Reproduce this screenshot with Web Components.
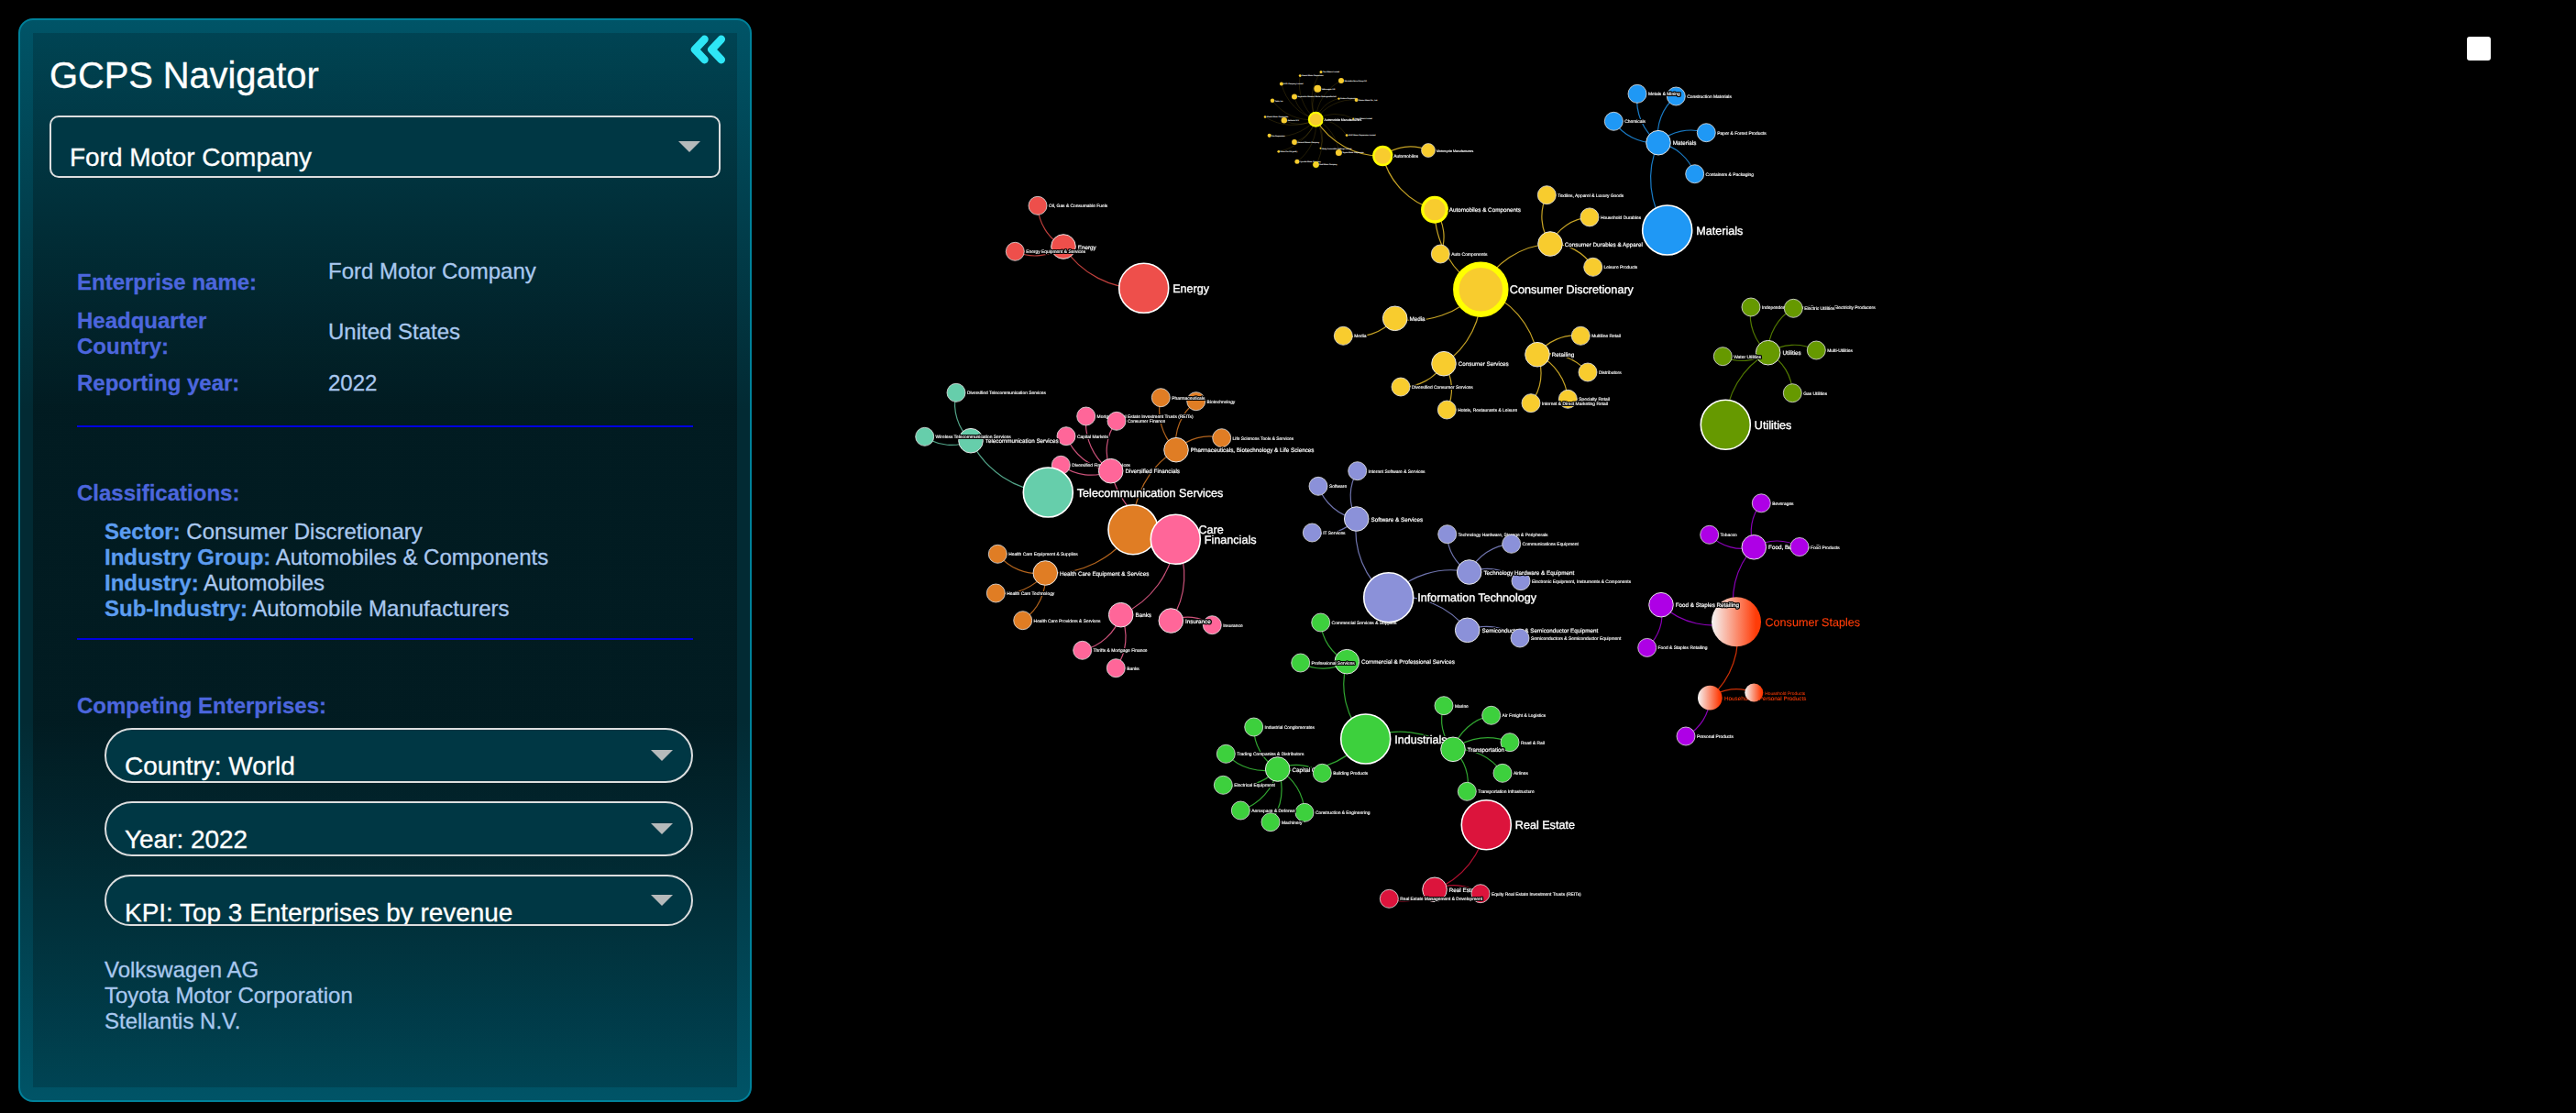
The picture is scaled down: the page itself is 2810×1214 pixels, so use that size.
<!DOCTYPE html>
<html lang="en">
<head>
<meta charset="utf-8">
<title>GCPS Navigator</title>
<style>
  html, body {
    height: 100%;
    margin: 0;
    background: #000;
    font-family: "Liberation Sans", Arial, Helvetica, sans-serif;
  }
</style>
</head>
<body>
<gcps-app></gcps-app>

<script>
class BaseElement extends HTMLElement {
  constructor() {
    super();
    this.attachShadow({ mode: 'open' });
  }

  connectedCallback() {
    const template = document.createElement('template');
    template.innerHTML = `<style>${this.getStyles()}</style>${this.getMarkup()}`;
    this.shadowRoot.replaceChildren(template.content.cloneNode(true));
  }
}

class DropDown extends BaseElement {
  getStyles() {
    return `
      :host {
        display: flex;
        justify-content: space-between;
        align-items: center;
        box-sizing: border-box;
        height: 60px;
        padding: 0 20px 0 20px;
        border: 2px solid #dcdedf;
        border-radius: 30px;
        background: #003744;
        color: #fff;
        font-size: 28px;
        line-height: 32px;
        letter-spacing: -0.03px;
        overflow: hidden;
      }
      :host([square]) {
        height: 68px;
        border-radius: 10px;
      }
      :host([short]) { height: 56px; }
      .value {
        align-self: flex-start;
        padding-top: 24px;
        white-space: nowrap;
      }
      :host([square]) .value { padding-top: 28px; }
      svg {
        width: 24px;
        height: 12px;
        flex: none;
      }
    `;
  }

  getMarkup() {
    return `
      <span class="value"><slot></slot></span>
      <svg viewBox="0 0 24 12"><path d="M0 0h24L12 12z" fill="#b6babb"/></svg>
    `;
  }
}

class InfoRow extends BaseElement {
  getStyles() {
    return `
      :host {
        display: grid;
        grid-template-columns: 274px 1fr;
        font-size: 24px;
        line-height: 28px;
      }
      .label {
        max-width: 190px;
        color: #4c66dd;
        font-weight: bold;
      }
      .value { color: #a9c8ef; }
      :host([raised]) .label, :host([lowered]) .value { padding-top: 12px; }
      :host([raised]) .label { max-width: none; }
    `;
  }

  getMarkup() {
    return `
      <span class="label">${this.getAttribute('label')}</span>
      <span class="value"><slot></slot></span>
    `;
  }
}

class PanelSection extends BaseElement {
  getStyles() {
    return `
      :host {
        display: block;
        border-top: 2px solid #0000e0;
        padding-top: 58px;
        font-size: 24px;
        line-height: 28px;
      }
      h2 {
        margin: 0;
        color: #4c66dd;
        font: inherit;
        font-weight: bold;
      }
      .content { padding-left: 30px; color: #a9c8ef; }
    `;
  }

  getMarkup() {
    return `
      <h2>${this.getAttribute('heading')}</h2>
      <div class="content"><slot></slot></div>
    `;
  }
}

class NavPanel extends BaseElement {
  getStyles() {
    return `
      :host {
        display: flex;
        position: relative;
        box-sizing: border-box;
        width: 800px;
        height: 1182px;
        padding: 14px;
        border: 2px solid #00819a;
        border-radius: 16px;
        background: linear-gradient(#005467 0%, #022a33 36%, #022a33 65%, #005467 100%);
        -webkit-text-stroke: 0.3px currentColor;
      }
      .body {
        flex: 1;
        padding: 23px 18px 0;
        background: linear-gradient(rgba(0, 0, 0, 0.18) 0%, rgba(0, 0, 0, 0.35) 36%, rgba(0, 0, 0, 0.35) 65%, rgba(0, 0, 0, 0.18) 100%);
      }
      .toggle {
        position: absolute;
        top: 15px;
        right: 25px;
        width: 40px;
        height: 34px;
      }
      h1 {
        margin: 0 0 21px;
        color: #fff;
        font-size: 40px;
        font-weight: normal;
        line-height: 46px;
        letter-spacing: -0.15px;
      }
      .sections { padding: 88px 30px 0; }
      .facts {
        display: grid;
        row-gap: 12px;
        padding-bottom: 32px;
      }
      .facts info-row:first-child { min-height: 42px; }
      .levels { padding: 14px 0 18px; }
      .levels b { color: #5c9df0; }
      .filters {
        display: grid;
        gap: 20px;
        padding: 10px 0 34px;
      }
    `;
  }

  getMarkup() {
    return `
      <div class="body">
        <h1>GCPS Navigator</h1>
        <drop-down square>Ford Motor Company</drop-down>
        <div class="sections">
          <div class="facts">
            <info-row raised label="Enterprise name:">Ford Motor Company</info-row>
            <info-row lowered label="Headquarter Country:">United States</info-row>
            <info-row label="Reporting year:">2022</info-row>
          </div>
          <panel-section heading="Classifications:">
            <div class="levels">
              <div><b>Sector:</b> Consumer Discretionary</div>
              <div><b>Industry Group:</b> Automobiles &amp; Components</div>
              <div><b>Industry:</b> Automobiles</div>
              <div><b>Sub-Industry:</b> Automobile Manufacturers</div>
            </div>
          </panel-section>
          <panel-section heading="Competing Enterprises:">
            <div class="filters">
              <drop-down>Country: World</drop-down>
              <drop-down>Year: 2022</drop-down>
              <drop-down short>KPI: Top 3 Enterprises by revenue</drop-down>
            </div>
            <div>Volkswagen AG</div>
            <div>Toyota Motor Corporation</div>
            <div>Stellantis N.V.</div>
          </panel-section>
        </div>
      </div>
      <svg class="toggle" viewBox="0 0 40 34" fill="none" stroke="#2ee6f6" stroke-width="8.5" stroke-linecap="round" stroke-linejoin="round">
        <path d="M15.500 5.800L5 17l10.500 11.200M33.800 5.800L23.300 17l10.500 11.200"/>
      </svg>
    `;
  }
}

const LEVELS = {
  sector: { r: 27, dx: 31.5, size: 12.6, stroke: 1.6, mark: 6.5 },
  group: { r: 13.3, dx: 15.75, size: 6.3, stroke: 1, mark: 3.3 },
  industry: { r: 10, dx: 11.9, size: 4.9, stroke: 0.8, mark: 2.3 },
  sub: { r: 7.5, dx: 9.1, size: 3.5, stroke: 0.6, mark: 2 },
};

const COLORS = {
  energy: '#ee4f4b',
  materials: '#1f98f5',
  industrials: '#3dd03d',
  discretionary: '#f8cc2e',
  staples: '#ae00e6',
  health: '#e07d24',
  financials: '#ff6699',
  it: '#8b91d9',
  telecom: '#66ceab',
  utilities: '#669900',
  realestate: '#dc143c',
  hot: '#ff3c08',
};

// [id, parent, level, x, y, color, label, flag]; later entries lie on top
const NODES = [
  ['en', '', 'sector', 1247.7, 314.3, 'energy', 'Energy'],
  ['en1', 'en', 'group', 1160, 269, 'energy', 'Energy'],
  ['en2', 'en1', 'industry', 1132, 224.3, 'energy', 'Oil, Gas & Consumable Fuels'],
  ['en3', 'en1', 'industry', 1107.3, 274.3, 'energy', 'Energy Equipment & Services'],

  ['ma', '', 'sector', 1818.7, 251, 'materials', 'Materials'],
  ['ma1', 'ma', 'group', 1809, 155.7, 'materials', 'Materials'],
  ['ma2', 'ma1', 'industry', 1760.3, 132.3, 'materials', 'Chemicals'],
  ['ma3', 'ma1', 'industry', 1828.3, 105, 'materials', 'Construction Materials'],
  ['ma4', 'ma1', 'industry', 1848.7, 189.7, 'materials', 'Containers & Packaging'],
  ['ma5', 'ma1', 'industry', 1786, 102.3, 'materials', 'Metals & Mining'],
  ['ma6', 'ma1', 'industry', 1861.3, 144.7, 'materials', 'Paper & Forest Products'],

  ['in', '', 'sector', 1489.7, 806, 'industrials', 'Industrials'],
  ['in1', 'in', 'group', 1393.7, 839, 'industrials', 'Capital Goods'],
  ['in11', 'in1', 'industry', 1442.3, 843.3, 'industrials', 'Building Products'],
  ['in12', 'in1', 'industry', 1423, 886.3, 'industrials', 'Construction & Engineering'],
  ['in13', 'in1', 'industry', 1353.3, 884, 'industrials', 'Aerospace & Defense'],
  ['in14', 'in1', 'industry', 1334.3, 856.3, 'industrials', 'Electrical Equipment'],
  ['in15', 'in1', 'industry', 1367.7, 793, 'industrials', 'Industrial Conglomerates'],
  ['in16', 'in1', 'industry', 1386, 896.7, 'industrials', 'Machinery'],
  ['in17', 'in1', 'industry', 1337.3, 822.3, 'industrials', 'Trading Companies & Distributors'],
  ['in2', 'in', 'group', 1469.3, 721.7, 'industrials', 'Commercial & Professional Services'],
  ['in21', 'in2', 'industry', 1440.7, 679, 'industrials', 'Commercial Services & Supplies'],
  ['in22', 'in2', 'industry', 1418.7, 723, 'industrials', 'Professional Services'],
  ['in31', 'in3', 'industry', 1647, 809.7, 'industrials', 'Road & Rail'],
  ['in3', 'in', 'group', 1585, 817.3, 'industrials', 'Transportation'],
  ['in32', 'in3', 'industry', 1626.7, 780.3, 'industrials', 'Air Freight & Logistics'],
  ['in33', 'in3', 'industry', 1639, 843.3, 'industrials', 'Airlines'],
  ['in34', 'in3', 'industry', 1575, 769.7, 'industrials', 'Marine'],
  ['in35', 'in3', 'industry', 1600.3, 863.3, 'industrials', 'Transportation Infrastructure'],

  ['cd', '', 'sector', 1615.3, 315.7, 'discretionary', 'Consumer Discretionary', 'mark'],
  ['cd1', 'cd', 'group', 1565, 228.7, 'discretionary', 'Automobiles & Components', 'mark'],
  ['cd11', 'cd1', 'industry', 1571.3, 277, 'discretionary', 'Auto Components'],
  ['cd12', 'cd1', 'industry', 1508.3, 170, 'discretionary', 'Automobiles', 'mark'],
  ['am', 'cd12', 'sub', 1435.3, 130.3, 'discretionary', 'Automobile Manufacturers', 'mark'],
  ['mm', 'cd12', 'sub', 1558, 164, 'discretionary', 'Motorcycle Manufacturers'],
  ['cd2', 'cd', 'group', 1691, 266, 'discretionary', 'Consumer Durables & Apparel'],
  ['cd21', 'cd2', 'industry', 1734, 236.9, 'discretionary', 'Household Durables'],
  ['cd22', 'cd2', 'industry', 1737.7, 291.3, 'discretionary', 'Leisure Products'],
  ['cd23', 'cd2', 'industry', 1687.3, 212.7, 'discretionary', 'Textiles, Apparel & Luxury Goods'],
  ['cd3', 'cd', 'group', 1575, 396.7, 'discretionary', 'Consumer Services'],
  ['cd31', 'cd3', 'industry', 1578.3, 447, 'discretionary', 'Hotels, Restaurants & Leisure'],
  ['cd32', 'cd3', 'industry', 1528, 422, 'discretionary', 'Diversified Consumer Services'],
  ['cd4', 'cd', 'group', 1521.7, 347.3, 'discretionary', 'Media'],
  ['cd41', 'cd4', 'industry', 1465.3, 366.3, 'discretionary', 'Media'],
  ['cd5', 'cd', 'group', 1677, 386.7, 'discretionary', 'Retailing'],
  ['cd51', 'cd5', 'industry', 1732, 406, 'discretionary', 'Distributors'],
  ['cd54', 'cd5', 'industry', 1710.3, 435.3, 'discretionary', 'Specialty Retail'],
  ['cd52', 'cd5', 'industry', 1670, 439.7, 'discretionary', 'Internet & Direct Marketing Retail'],
  ['cd53', 'cd5', 'industry', 1724.3, 366.3, 'discretionary', 'Multiline Retail'],

  ['cs', '', 'sector', 1894, 678.3, 'hot', 'Consumer Staples', 'hot'],
  ['cs1', 'cs', 'group', 1812, 659.7, 'staples', 'Food & Staples Retailing'],
  ['cs11', 'cs1', 'industry', 1796.7, 706.4, 'staples', 'Food & Staples Retailing'],
  ['cs2', 'cs', 'group', 1913.3, 596.8, 'staples', 'Food, Beverage & Tobacco'],
  ['cs21', 'cs2', 'industry', 1921.3, 548.8, 'staples', 'Beverages'],
  ['cs22', 'cs2', 'industry', 1963, 596.5, 'staples', 'Food Products'],
  ['cs23', 'cs2', 'industry', 1864.7, 583.3, 'staples', 'Tobacco'],
  ['cs3', 'cs', 'group', 1865.3, 761.1, 'hot', 'Household & Personal Products', 'hot'],
  ['cs31', 'cs3', 'industry', 1913.3, 755.5, 'hot', 'Household Products', 'hot'],
  ['cs32', 'cs3', 'industry', 1839, 803, 'staples', 'Personal Products'],

  ['hc', '', 'sector', 1236, 577.7, 'health', 'Health Care'],
  ['hc1', 'hc', 'group', 1140.3, 625, 'health', 'Health Care Equipment & Services'],
  ['hc11', 'hc1', 'industry', 1088.3, 604.3, 'health', 'Health Care Equipment & Supplies'],
  ['hc12', 'hc1', 'industry', 1115.7, 676.7, 'health', 'Health Care Providers & Services'],
  ['hc13', 'hc1', 'industry', 1086.3, 647, 'health', 'Health Care Technology'],
  ['hc23', 'hc2', 'industry', 1332.7, 477.7, 'health', 'Life Sciences Tools & Services'],
  ['hc2', 'hc', 'group', 1283, 490.7, 'health', 'Pharmaceuticals, Biotechnology & Life Sciences'],
  ['hc21', 'hc2', 'industry', 1304.7, 437.7, 'health', 'Biotechnology'],
  ['hc22', 'hc2', 'industry', 1266.3, 433.7, 'health', 'Pharmaceuticals'],

  ['fi', '', 'sector', 1282.3, 588.3, 'financials', 'Financials'],
  ['fi1', 'fi', 'group', 1222.7, 670.7, 'financials', 'Banks'],
  ['fi11', 'fi1', 'industry', 1217.3, 728.7, 'financials', 'Banks'],
  ['fi12', 'fi1', 'industry', 1180.7, 709.3, 'financials', 'Thrifts & Mortgage Finance'],
  ['fi21', 'fi2', 'industry', 1157.3, 507.3, 'financials', 'Diversified Financial Services'],
  ['fi24', 'fi2', 'industry', 1184.7, 454, 'financials', 'Mortgage Real Estate Investment Trusts (REITs)'],
  ['fi2', 'fi', 'group', 1211.7, 513.7, 'financials', 'Diversified Financials'],
  ['fi22', 'fi2', 'industry', 1218, 459.3, 'financials', 'Consumer Finance'],
  ['fi23', 'fi2', 'industry', 1163, 475.7, 'financials', 'Capital Markets'],
  ['fi31', 'fi3', 'industry', 1322.3, 681.7, 'financials', 'Insurance'],
  ['fi3', 'fi', 'group', 1277.3, 677, 'financials', 'Insurance'],

  ['it', '', 'sector', 1514.7, 651.7, 'it', 'Information Technology'],
  ['it1', 'it', 'group', 1479.7, 566, 'it', 'Software & Services'],
  ['it11', 'it1', 'industry', 1480.7, 513.7, 'it', 'Internet Software & Services'],
  ['it12', 'it1', 'industry', 1431.3, 581, 'it', 'IT Services'],
  ['it13', 'it1', 'industry', 1438, 530.3, 'it', 'Software'],
  ['it23', 'it2', 'industry', 1578.7, 582.7, 'it', 'Technology Hardware, Storage & Peripherals'],
  ['it22', 'it2', 'industry', 1659, 633.7, 'it', 'Electronic Equipment, Instruments & Components'],
  ['it2', 'it', 'group', 1602.7, 624, 'it', 'Technology Hardware & Equipment'],
  ['it21', 'it2', 'industry', 1648.7, 593.3, 'it', 'Communications Equipment'],
  ['it3', 'it', 'group', 1600.7, 687.3, 'it', 'Semiconductors & Semiconductor Equipment'],
  ['it31', 'it3', 'industry', 1658, 696, 'it', 'Semiconductors & Semiconductor Equipment'],

  ['te', '', 'sector', 1143.3, 537, 'telecom', 'Telecommunication Services'],
  ['te1', 'te', 'group', 1059, 480.7, 'telecom', 'Telecommunication Services'],
  ['te11', 'te1', 'industry', 1043, 428.3, 'telecom', 'Diversified Telecommunication Services'],
  ['te12', 'te1', 'industry', 1008.7, 476.3, 'telecom', 'Wireless Telecommunication Services'],

  ['ut', '', 'sector', 1882.3, 463.2, 'utilities', 'Utilities'],
  ['ut1', 'ut', 'group', 1928.7, 384.7, 'utilities', 'Utilities'],
  ['ut13', 'ut1', 'industry', 1910, 335, 'utilities', 'Independent Power and Renewable Electricity Producers'],
  ['ut11', 'ut1', 'industry', 1956.3, 336.3, 'utilities', 'Electric Utilities'],
  ['ut12', 'ut1', 'industry', 1955.3, 428.7, 'utilities', 'Gas Utilities'],
  ['ut14', 'ut1', 'industry', 1981.3, 382, 'utilities', 'Multi-Utilities'],
  ['ut15', 'ut1', 'industry', 1879.3, 388.7, 'utilities', 'Water Utilities'],

  ['re', '', 'sector', 1621.3, 899.7, 'realestate', 'Real Estate'],
  ['re1', 're', 'group', 1565, 970.3, 'realestate', 'Real Estate'],
  ['re11', 're1', 'industry', 1615, 974.7, 'realestate', 'Equity Real Estate Investment Trusts (REITs)'],
  ['re12', 're1', 'industry', 1515.3, 980.3, 'realestate', 'Real Estate Management & Development'],
];

// [x, y, radius, name]
const COMPANIES = [
  [1441, 78.6, 1.5, 'Tata Motors Limited'],
  [1418.2, 82.6, 1.4, 'Suzuki Motor Corporation'],
  [1397.9, 91.4, 2, 'BYD Company Limited'],
  [1463, 88, 3, 'Mercedes-Benz Group AG'],
  [1437.3, 96.7, 4, 'Volkswagen AG'],
  [1412, 105.5, 3, 'Bayerische Motoren Werke Aktiengesellschaft'],
  [1388, 109.7, 2.2, 'Tesla, Inc.'],
  [1460.5, 107.6, 1.2, 'Subaru Corporation'],
  [1479.6, 109, 2, 'Nissan Motor Co., Ltd.'],
  [1380, 127.5, 1.3, 'Mazda Motor Corporation'],
  [1400.8, 131.3, 3.2, 'Stellantis N.V.'],
  [1476.2, 129.5, 1, 'Isuzu Motors Limited'],
  [1469.1, 147.6, 1.4, 'SAIC Motor Corporation Limited'],
  [1384.7, 147.8, 2.1, 'Kia Corporation'],
  [1412, 155, 2.9, 'General Motors Company'],
  [1394.8, 165.3, 1.4, 'Volvo Car AB (publ.)'],
  [1440.5, 161.8, 1, 'Geely Automobile Holdings Limited'],
  [1460.4, 166.6, 3.5, 'Toyota Motor Corporation'],
  [1414.9, 176.2, 2.5, 'Hyundai Motor Company'],
  [1435.5, 179.6, 3.1, 'Ford Motor Company', 'mark'],
];

class SectorGraph extends BaseElement {
  getStyles() {
    return `
      :host { display: block; overflow: hidden; }
      svg { display: block; width: 100%; height: 100%; }
      .link { fill: none; stroke-width: 1.2; stroke-opacity: 0.8; }
      .link.thin { stroke-width: 0.4; stroke-opacity: 0.35; }
      text {
        fill: #fff;
        stroke: #fff;
        stroke-width: 0.028em;
        text-rendering: geometricPrecision;
        filter: drop-shadow(1px 0 #000) drop-shadow(-1px 0 #000) drop-shadow(0 1px #000) drop-shadow(0 -1px #000);
      }
      text.company { filter: none; }
      text.hot { fill: #ff3c08; stroke: #ff3c08; stroke-width: 0.01em; }
    `;
  }

  arc(x1, y1, x2, y2) {
    const d = Math.hypot(x2 - x1, y2 - y1).toFixed(1);
    return `M${x1},${y1}A${d},${d} 0 0,1 ${x2},${y2}`;
  }

  getLinks() {
    const byId = new Map(NODES.map((n) => [n[0], n]));
    const hub = byId.get('am');
    const thin = COMPANIES.map(([x, y]) =>
      `<path class="link thin" stroke="#f8cc2e" d="${this.arc(hub[3], hub[4], x, y)}"/>`);
    const links = NODES.filter((n) => n[1]).map((n) => {
      const p = byId.get(n[1]);
      return `<path class="link" stroke="${COLORS[n[5]]}" d="${this.arc(p[3], p[4], n[3], n[4])}"/>`;
    });
    return thin.concat(links).join('');
  }

  getNode([, , level, x, y, color, label, flag]) {
    const l = LEVELS[level];
    const fill = flag === 'hot' ? 'url(#hot)' : COLORS[color];
    const stroke = flag === 'mark' ? '#ffff00' : flag === 'hot' ? 'none' : level === 'sector' ? '#fff' : '#e4e4e4';
    const width = flag === 'mark' ? l.mark : l.stroke;
    return `
      <circle cx="${x}" cy="${y}" r="${l.r}" fill="${fill}" stroke="${stroke}" stroke-width="${width}"/>
      <text class="${flag || ''}" x="${x + l.dx}" y="${y + 0.3 + l.size * 0.35}" font-size="${l.size}">${label.replace(/&/g, '&amp;')}</text>`;
  }

  getCompany([x, y, r, name, flag]) {
    const ring = flag ? 'stroke="#ffff00" stroke-width="0.7"' : '';
    return `
      <circle cx="${x}" cy="${y}" r="${r}" fill="#f8cc2e" ${ring}/>
      <text class="company" x="${x + r + 0.4}" y="${y + 0.8}" font-size="2.1">${name}</text>`;
  }

  getMarkup() {
    return `
      <svg viewBox="820 0 1990 1214">
        <defs>
          <linearGradient id="hot">
            <stop offset="0" stop-color="#f5f5f5"/>
            <stop offset="0.9" stop-color="#ff3c08"/>
          </linearGradient>
        </defs>
        ${this.getLinks()}
        ${NODES.map((n) => this.getNode(n)).join('')}
        ${COMPANIES.map((c) => this.getCompany(c)).join('')}
      </svg>
    `;
  }
}

class GcpsApp extends BaseElement {
  getStyles() {
    return `
      :host {
        display: flex;
        position: relative;
        height: 1214px;
        overflow: hidden;
        background: #000;
      }
      nav-panel { flex: none; margin: 20px 0 0 20px; }
      sector-graph { flex: 1; }
      .corner {
        position: absolute;
        top: 40px;
        right: 93px;
        width: 26px;
        height: 26px;
        border-radius: 3px;
        background: #fff;
      }
    `;
  }

  getMarkup() {
    return `
      <nav-panel></nav-panel>
      <sector-graph></sector-graph>
      <div class="corner"></div>
    `;
  }
}

customElements.define('drop-down', DropDown);
customElements.define('info-row', InfoRow);
customElements.define('panel-section', PanelSection);
customElements.define('nav-panel', NavPanel);
customElements.define('sector-graph', SectorGraph);
customElements.define('gcps-app', GcpsApp);
</script>
</body>
</html>
